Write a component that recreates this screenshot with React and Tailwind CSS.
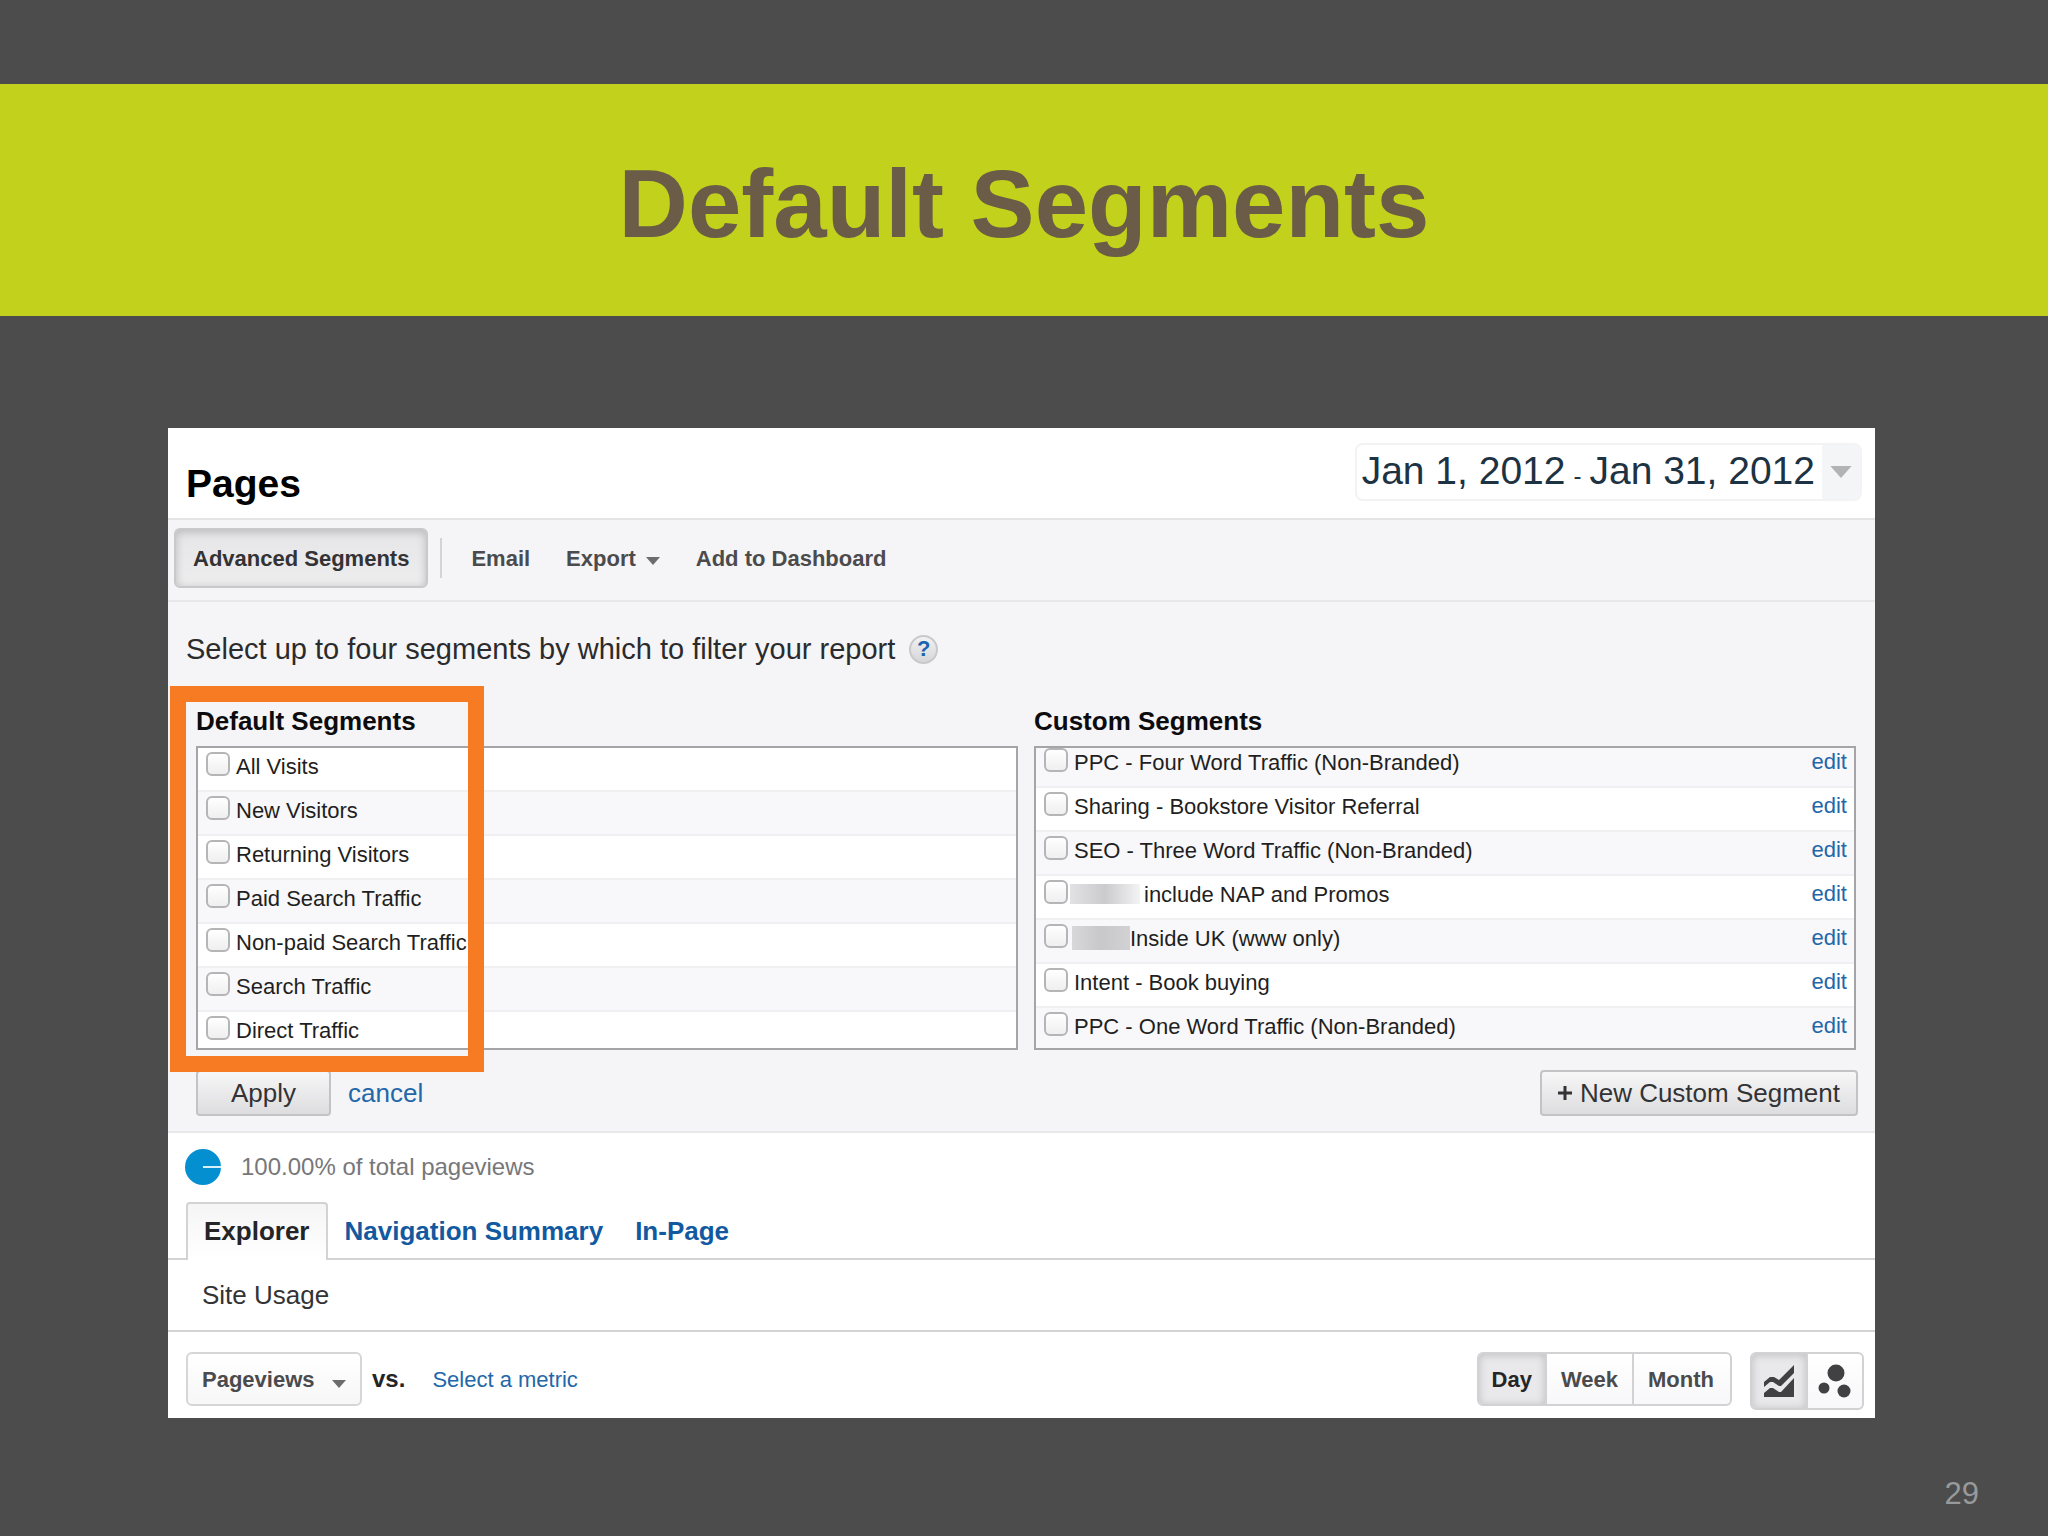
import React from "react";

const defaultSegments = [
  "All Visits",
  "New Visitors",
  "Returning Visitors",
  "Paid Search Traffic",
  "Non-paid Search Traffic",
  "Search Traffic",
  "Direct Traffic",
];

const customSegments = [
  { label: "PPC - Four Word Traffic (Non-Branded)" },
  { label: "Sharing - Bookstore Visitor Referral" },
  { label: "SEO - Three Word Traffic (Non-Branded)" },
  { label: "include NAP and Promos", redacted: "wide" },
  { label: "Inside UK (www only)", redacted: "narrow" },
  { label: "Intent - Book buying" },
  { label: "PPC - One Word Traffic (Non-Branded)" },
];

function Caret({ className }) {
  return (
    <svg viewBox="0 0 16 9" className={className} aria-hidden="true">
      <path d="M0 0H16L8 9Z" fill="currentColor" />
    </svg>
  );
}

function Redaction({ kind }) {
  if (kind === "wide") {
    return (
      <span className="mr-1 -ml-1 h-5 w-[70px] bg-linear-to-r from-[#e2e2e4] via-[#cbcbcd] to-[#f4f4f5]" />
    );
  }
  return (
    <span className="-ml-0.5 h-6 w-[58px] bg-linear-to-r from-[#d8d8da] via-[#c8c8ca] to-[#d2d2d4]" />
  );
}

function SegmentRow({ label, redacted, shaded, editable }) {
  return (
    <li
      className={
        "flex h-11 items-start justify-between border-b-2 border-[#f0eff1] pr-[7px] pl-2 " +
        (shaded ? "bg-[#f8f7f9]" : "bg-white")
      }
    >
      <label className="flex items-start gap-1.5">
        <input
          type="checkbox"
          className="mt-1 size-6 shrink-0 appearance-none rounded-md border-2 border-[#b5b5b7] bg-linear-to-b from-white to-[#efeff0]"
        />
        <span className="flex h-9 items-center whitespace-nowrap">
          {redacted && <Redaction kind={redacted} />}
          {label}
        </span>
      </label>
      {editable && (
        <a href="#edit" className="leading-9 text-[#2467a9]">
          edit
        </a>
      )}
    </li>
  );
}

function Toolbar() {
  return (
    <div className="flex items-center border-b-2 border-[#e7e6e9] bg-[#f5f4f6] pt-2 pb-3 pl-1.5 text-[22px] font-bold text-[#4b4b4d]">
      <button
        type="button"
        className="h-[60px] rounded-md border-2 border-[#c9c9ca] bg-linear-to-b from-[#e6e5e7] to-[#ededee] px-[17px] text-[#333335] shadow-[inset_0_2px_8px_#b8b8ba]"
      >
        Advanced Segments
      </button>
      <span className="ml-3 h-10 w-0.5 bg-[#d4d4d6]" />
      <button type="button" className="ml-[29px]">
        Email
      </button>
      <button type="button" className="ml-9 flex items-center gap-2.5">
        Export
        <Caret className="mt-1.5 h-2 w-3.5 text-[#6c6c6e]" />
      </button>
      <button type="button" className="ml-9">
        Add to Dashboard
      </button>
    </div>
  );
}

function SegmentPicker() {
  return (
    <section className="border-b-2 border-[#e7e6e9] bg-[#f5f4f6] pt-7 pb-[15px]">
      <div className="flex items-center gap-3.5 pl-[18px] text-[#2b2b2d]">
        <h2 className="text-[29px] leading-[38px]">
          Select up to four segments by which to filter your report
        </h2>
        <button
          type="button"
          aria-label="Help"
          className="size-[29px] rounded-full border-2 border-[#c9c9cb] bg-linear-to-b from-[#f2f2f3] to-[#d6d6d8] text-[22px] leading-6 font-bold text-[#1a65ad]"
        >
          ?
        </button>
      </div>

      <div className="mt-[37px] grid grid-cols-2 gap-4 pr-[19px] pl-7 text-[22px] text-[#1f1f22]">
        <div className="relative">
          <h3 className="mb-[9px] text-[26px] leading-8 font-bold text-[#0c0c0e]">Default Segments</h3>
          <ul className="h-[304px] overflow-hidden border-2 border-[#a5a5a7] bg-white">
            {defaultSegments.map((label, i) => (
              <SegmentRow key={label} label={label} shaded={i % 2 === 1} />
            ))}
          </ul>
          <div className="pointer-events-none absolute -top-[19px] -left-[26px] z-10 h-[386px] w-[314px] border-16 border-[#f77b22]" />
        </div>
        <div>
          <h3 className="mb-[9px] text-[26px] leading-8 font-bold text-[#0c0c0e]">Custom Segments</h3>
          <div className="h-[304px] overflow-hidden border-2 border-[#a5a5a7] bg-white">
            <ul className="-mt-1">
              {customSegments.map((segment, i) => (
                <SegmentRow
                  key={segment.label}
                  label={segment.label}
                  redacted={segment.redacted}
                  shaded={i % 2 === 0}
                  editable
                />
              ))}
            </ul>
          </div>
        </div>
      </div>

      <div className="mt-5 flex items-center pr-[17px] pl-7 text-[26px] text-[#333335]">
        <button
          type="button"
          className="h-[46px] rounded-sm border-2 border-[#c3c3c5] bg-linear-to-b from-[#f7f7f8] to-[#dddddf] px-[33px]"
        >
          Apply
        </button>
        <a href="#cancel" className="ml-[17px] text-[#2467a9]">
          cancel
        </a>
        <button
          type="button"
          className="ml-auto flex h-[46px] items-center gap-2 rounded-sm border-2 border-[#c3c3c5] bg-linear-to-b from-[#f7f7f8] to-[#dddddf] px-4"
        >
          <svg viewBox="0 0 14 14" className="size-3.5" aria-hidden="true">
            <path d="M7 0V14M0 7H14" stroke="currentColor" strokeWidth="3" />
          </svg>
          New Custom Segment
        </button>
      </div>
    </section>
  );
}

function ReportTabs() {
  return (
    <>
      <div className="flex items-center gap-5 pt-4 pl-[17px] text-[24px] text-[#77777a]">
        <svg viewBox="0 0 36 36" className="size-9" aria-hidden="true">
          <circle cx="18" cy="18" r="18" fill="#048fd0" />
          <path d="M18 18H36" stroke="#d9f0fb" strokeWidth="2" />
        </svg>
        <p>100.00% of total pageviews</p>
      </div>

      <nav className="mt-[17px] flex items-end border-b-2 border-[#d3d3d5] pl-[18px] text-[26px] font-bold text-[#1259a0]">
        <a
          href="#explorer"
          className="-mb-0.5 h-[58px] rounded-t-sm border-2 border-b-0 border-[#d3d3d5] bg-linear-to-b from-[#f5f5f6] to-white px-4 leading-[54px] text-[#252527]"
        >
          Explorer
        </a>
        <a href="#navigation" className="ml-[17px] leading-[54px]">
          Navigation Summary
        </a>
        <a href="#in-page" className="ml-8 leading-[54px]">
          In-Page
        </a>
      </nav>

      <p className="border-b-2 border-[#d3d3d5] pl-[34px] text-[26px] leading-[70px] text-[#333335]">
        Site Usage
      </p>
    </>
  );
}

function ChartControls() {
  return (
    <div className="flex items-start pt-5 pr-[11px] pb-2 pl-[18px] text-[22px] font-bold text-[#4b4b4d]">
      <div className="flex h-[54px] items-center">
        <div className="relative flex items-center">
          <select
            aria-label="Metric"
            className="h-[54px] w-44 appearance-none rounded-md border-2 border-[#d6d6d8] bg-linear-to-b from-white to-[#f7f7f8] pl-3.5 font-bold"
          >
            <option>Pageviews</option>
          </select>
          <Caret className="pointer-events-none absolute top-7 right-4 h-2 w-3.5 text-[#6c6c6e]" />
        </div>
        <span className="ml-2.5 text-[24px] text-[#252527]">vs.</span>
        <a href="#metric" className="ml-[27px] font-normal text-[#2467a9]">
          Select a metric
        </a>
      </div>

      <div className="ml-auto flex h-[54px] overflow-hidden rounded-md border-2 border-[#d2d2d4] bg-linear-to-b from-white to-[#f8f7f9]">
        <button
          type="button"
          className="bg-[#e9e8ea] px-[13px] text-[#252527] shadow-[inset_0_1px_8px_#bdbdbf]"
        >
          Day
        </button>
        <button type="button" className="border-l-2 border-[#d2d2d4] px-3.5">
          Week
        </button>
        <button type="button" className="border-l-2 border-[#d2d2d4] pr-4 pl-3.5">
          Month
        </button>
      </div>

      <div className="ml-[18px] flex h-[58px] overflow-hidden rounded-md border-2 border-[#d2d2d4] bg-linear-to-b from-white to-[#f8f7f9] text-[#414143]">
        <button
          type="button"
          aria-label="Line chart"
          className="flex w-[54px] items-center justify-center bg-[#e9e8ea] shadow-[inset_0_1px_8px_#bdbdbf]"
        >
          <svg viewBox="0 0 30 32" className="h-8 w-[30px]">
            <path d="M0 17L6 12H10L15 15L30 0V8L17 21H15L9 17H6L0 22Z" fill="currentColor" />
            <path d="M0 32V28L6 23H9L15 27H17L30 13V32Z" fill="currentColor" />
          </svg>
        </button>
        <button
          type="button"
          aria-label="Motion chart"
          className="flex w-14 items-center justify-center border-l-2 border-[#d2d2d4]"
        >
          <svg viewBox="0 0 34 34" className="size-[34px]">
            <circle cx="18" cy="9" r="8.500" fill="currentColor" />
            <circle cx="6" cy="24" r="5.500" fill="currentColor" />
            <circle cx="26" cy="27" r="6.500" fill="currentColor" />
          </svg>
        </button>
      </div>
    </div>
  );
}

export default function App() {
  return (
    <div className="flex min-h-screen flex-col bg-[#4b4c4b] pt-[84px] font-['Liberation_Sans',Arial,sans-serif]">
      <header className="bg-[#c2d11b] pt-[72px] pb-16 text-center">
        <h1 className="text-[96px] leading-[96px] font-bold text-[#6a5c47]">Default Segments</h1>
      </header>

      <main className="mt-28 mr-[173px] ml-[168px] bg-white">
        <div className="flex items-start justify-between border-b-2 border-[#e4e4e7] pt-[15px] pr-[13px] pb-3 pl-[18px]">
          <h2 className="mt-[19px] text-[39px] leading-[44px] font-bold text-black">Pages</h2>
          <button
            type="button"
            className="flex h-[58px] overflow-hidden rounded-lg border-2 border-[#f3f3f5] bg-white text-[39px] leading-[52px] text-[#1d3242]"
          >
            <span className="flex items-baseline pr-[7px] pl-[5px]">
              Jan 1, 2012
              <span className="mx-2 text-[24px]">-</span>
              Jan 31, 2012
            </span>
            <span className="flex h-full w-[38px] items-center bg-[#f4f5f7] pl-2">
              <Caret className="h-3 w-[22px] text-[#b3b3b5]" />
            </span>
          </button>
        </div>
        <Toolbar />
        <SegmentPicker />
        <ReportTabs />
        <ChartControls />
      </main>

      <footer className="mt-auto pr-[69px] pb-6 text-right text-[31px] leading-9 text-[#98999a]">29</footer>
    </div>
  );
}
